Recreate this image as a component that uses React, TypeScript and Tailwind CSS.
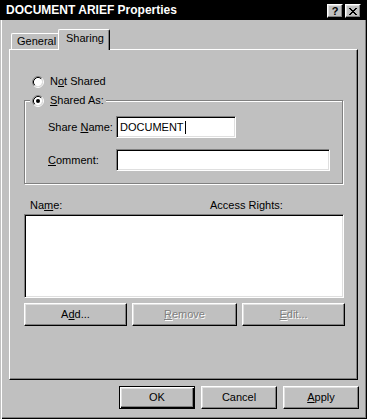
import React from "react";

const raised =
  "border border-t-white border-l-white border-r-black border-b-black shadow-[inset_-1px_-1px_0_#808080,inset_1px_1px_0_#dfdfdf]";
const sunken =
  "border border-t-[#808080] border-l-[#808080] border-r-white border-b-white shadow-[inset_1px_1px_0_#000,inset_-1px_-1px_0_#dfdfdf] bg-white";

const Radio = ({ checked }: { checked?: boolean }) => (
  <svg width="12" height="12" viewBox="0 0 12 12" className="shrink-0">
    <circle cx="6" cy="6" r="4.2" fill="#fff" />
    <path d="M2.11 9.89A5.5 5.5 0 0 1 9.89 2.11" stroke="#808080" fill="none" />
    <path d="M9.89 2.11A5.5 5.5 0 0 1 2.11 9.89" stroke="#fff" fill="none" />
    <path d="M2.82 9.18A4.5 4.5 0 0 1 9.18 2.82" stroke="#000" fill="none" />
    <path d="M9.18 2.82A4.5 4.5 0 0 1 2.82 9.18" stroke="#dfdfdf" fill="none" />
    {checked && <circle cx="6" cy="6" r="2" fill="#000" />}
  </svg>
);

const closeRows = ["11000011", "01100110", "00111100", "00011000", "00111100", "01100110", "11000011"];

const CloseGlyph = () => (
  <svg width="8" height="7" viewBox="0 0 8 7" shapeRendering="crispEdges">
    {closeRows.map((row, y) =>
      row.split("").map((c, x) => (c === "1" ? <rect key={`${x}-${y}`} x={x} y={y} width="1" height="1" fill="#000" /> : null))
    )}
  </svg>
);

const Btn = ({ className, children, disabled }: { className: string; children: React.ReactNode; disabled?: boolean }) => (
  <div
    className={`flex items-center justify-center h-[23px] bg-[#c0c0c0] ${raised} ${className} ${
      disabled ? "text-[#808080] [text-shadow:1px_1px_0_#fff]" : ""
    }`}
  >
    {children}
  </div>
);

const App = () => {
  return (
    <div className="w-[367px] h-[419px] bg-[#c0c0c0] flex flex-col font-['Liberation_Sans',Arial,sans-serif] text-[11px] leading-[13px] text-black select-none">
      {/* title bar */}
      <div className="h-[20px] shrink-0 bg-black flex items-center pl-[6px] pr-[6px]">
        <span className="flex-1 text-white font-bold text-[12px] leading-[14px]">DOCUMENT ARIEF Properties</span>
        <div className={`w-[16px] h-[14px] mt-[2px] bg-[#c0c0c0] flex items-center justify-center font-bold text-[11px] ${raised}`}>
          ?
        </div>
        <div className={`w-[16px] h-[14px] mt-[2px] ml-[2px] bg-[#c0c0c0] flex items-center justify-center ${raised}`}>
          <CloseGlyph />
        </div>
      </div>

      {/* body */}
      <div className="flex-1 flex flex-col shadow-[inset_1px_0_0_#c0c0c0,inset_2px_0_0_#fff,inset_-1px_-1px_0_#000,inset_-2px_-2px_0_#808080]">
        {/* tabs */}
        <div className="flex items-end h-[20px] mt-[9px] ml-[11px] shrink-0">
          <div className="w-[49px] h-[16px] border-t border-l border-white rounded-tl-[2px] flex items-center pl-[5px]">
            General
          </div>
          <div className="relative z-10 -ml-[2px] -mb-[1px] w-[52px] h-[21px] bg-[#c0c0c0] border-t border-l border-r border-t-white border-l-white border-r-black rounded-t-[2px] shadow-[inset_-1px_0_0_#808080] pt-[2px] pl-[7px]">
            Sharing
          </div>
        </div>

        {/* panel */}
        <div className="ml-[9px] w-[349px] h-[331px] shrink-0 border border-t-white border-l-white border-r-black border-b-black shadow-[inset_-1px_-1px_0_#808080] flex flex-col">
          <div className="flex items-center h-[13px] mt-[25px] ml-[22px] gap-[6px]">
            <Radio />
            <span>
              N<u>o</u>t Shared
            </span>
          </div>

          {/* group box */}
          <div className="mt-[12px] ml-[14px] w-[319px] h-[84px] border border-[#808080] shadow-[inset_1px_1px_0_#fff,1px_1px_0_#fff] flex flex-col">
            <div className="relative z-10 -mt-[7px] ml-[5px] w-fit h-[13px] flex items-center gap-[6px] bg-[#c0c0c0] px-[2px]">
              <Radio checked />
              <span>
                <u>S</u>hared As:
              </span>
            </div>
            <div className="flex items-center mt-[9px] ml-[23px]">
              <span className="w-[68px]">
                Share <u>N</u>ame:
              </span>
              <div className={`w-[120px] h-[22px] flex items-center pl-[3px] ${sunken}`}>
                DOCUMENT<span className="w-[1px] h-[13px] bg-black ml-[1px]" />
              </div>
            </div>
            <div className="flex items-center mt-[11px] ml-[23px]">
              <span className="w-[68px]">
                <u>C</u>omment:
              </span>
              <div className={`w-[214px] h-[22px] ${sunken}`} />
            </div>
          </div>

          {/* list */}
          <div className="flex h-[13px] mt-[15px] ml-[20px]">
            <span className="w-[180px]">
              Na<u>m</u>e:
            </span>
            <span>Access Rights:</span>
          </div>
          <div className={`mt-[2px] ml-[14px] w-[320px] h-[84px] ${sunken}`} />

          <div className="flex mt-[5px] ml-[14px]">
            <Btn className="w-[103px]">
              A<u>d</u>d...
            </Btn>
            <Btn className="w-[105px] ml-[5px]" disabled>
              <u>R</u>emove
            </Btn>
            <Btn className="w-[103px] ml-[5px]" disabled>
              <u>E</u>dit...
            </Btn>
          </div>
        </div>

        {/* dialog buttons */}
        <div className="flex justify-end gap-[6px] pr-[8px] mt-[6px]">
          <div className="w-[76px] h-[23px] flex items-center justify-center border border-black shadow-[inset_1px_1px_0_#fff,inset_-1px_-1px_0_#000,inset_-2px_-2px_0_#808080,inset_2px_2px_0_#dfdfdf]">
            OK
          </div>
          <Btn className="w-[76px]">Cancel</Btn>
          <Btn className="w-[76px]">
            <u>A</u>pply
          </Btn>
        </div>
      </div>
    </div>
  );
};

export default App;
